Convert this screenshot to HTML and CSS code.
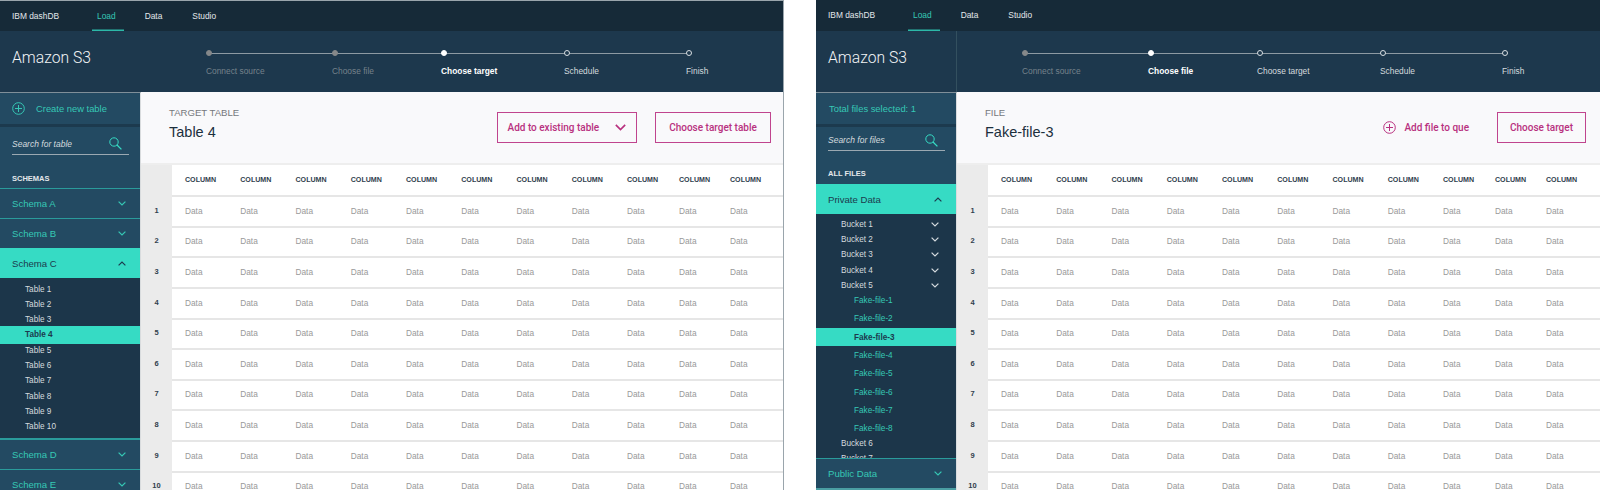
FILE: index.html
```html
<!DOCTYPE html>
<html lang="en">
<head>
    <meta charset="UTF-8">
    <title>IBM dashDB - Load</title>
    <link rel="stylesheet" href="styles.css">
</head>
<body>
    <svg class="sprite" xmlns="http://www.w3.org/2000/svg">
        <symbol id="chev-down" viewBox="0 0 8 5"><path d="M.6.6 4 4 7.4.6" fill="none" stroke="currentColor" stroke-width="1.2"/></symbol>
        <symbol id="chev-up" viewBox="0 0 8 5"><path d="M.6 4.4 4 1l3.4 3.4" fill="none" stroke="currentColor" stroke-width="1.2"/></symbol>
        <symbol id="plus" viewBox="0 0 13 13"><circle cx="6.5" cy="6.5" r="5.8" fill="none" stroke="currentColor"/><path d="M6.5 3v7M3 6.5h7" fill="none" stroke="currentColor"/></symbol>
        <symbol id="search" viewBox="0 0 13 13"><circle cx="5" cy="5" r="4.2" fill="none" stroke="currentColor"/><path d="M8 8l4.4 4.4" fill="none" stroke="currentColor" stroke-width="1.3"/></symbol>
    </svg>

    <div class="page">
        <!-- Choose target -->
        <section class="panel panel-edge">
            <nav class="topbar">
                <span class="brand">IBM dashDB</span>
                <a class="tab tab-on">Load</a>
                <a class="tab">Data</a>
                <a class="tab">Studio</a>
            </nav>
            <header class="head">
                <h1 class="source">Amazon S3</h1>
                <ol class="steps">
                    <li class="step done">Connect source</li>
                    <li class="step done">Choose file</li>
                    <li class="step now">Choose target</li>
                    <li class="step">Schedule</li>
                    <li class="step">Finish</li>
                </ol>
            </header>
            <div class="body">
                <aside class="side">
                    <div class="side-top"><svg class="ico-plus"><use href="#plus"/></svg>Create new table</div>
                    <div class="search"><span>Search for table</span><svg class="ico-search"><use href="#search"/></svg></div>
                    <div class="side-label">SCHEMAS</div>
                    <div class="acc">Schema A<svg class="chev"><use href="#chev-down"/></svg></div>
                    <div class="acc">Schema B<svg class="chev"><use href="#chev-down"/></svg></div>
                    <div class="acc acc-on">Schema C<svg class="chev"><use href="#chev-up"/></svg></div>
                    <ul class="list list-tables">
                        <li>Table 1</li>
                        <li>Table 2</li>
                        <li>Table 3</li>
                        <li class="picked">Table 4</li>
                        <li>Table 5</li>
                        <li>Table 6</li>
                        <li>Table 7</li>
                        <li>Table 8</li>
                        <li>Table 9</li>
                        <li>Table 10</li>
                    </ul>
                    <div class="acc">Schema D<svg class="chev"><use href="#chev-down"/></svg></div>
                    <div class="acc">Schema E<svg class="chev"><use href="#chev-down"/></svg></div>
                </aside>
                <main class="main">
                    <div class="main-head">
                        <div class="titles">
                            <div class="kicker">TARGET TABLE</div>
                            <div class="title">Table 4</div>
                        </div>
                        <button class="btn btn-select">Add to existing table<svg class="chev-btn"><use href="#chev-down"/></svg></button>
                        <button class="btn btn-target">Choose target table</button>
                    </div>
                    <div class="grid">
                        <div class="row row-head"><b class="num"></b><b>COLUMN</b><b>COLUMN</b><b>COLUMN</b><b>COLUMN</b><b>COLUMN</b><b>COLUMN</b><b>COLUMN</b><b>COLUMN</b><b>COLUMN</b><b>COLUMN</b><b>COLUMN</b></div>
                        <div class="row"><b class="num">1</b><i>Data</i><i>Data</i><i>Data</i><i>Data</i><i>Data</i><i>Data</i><i>Data</i><i>Data</i><i>Data</i><i>Data</i><i>Data</i></div>
                        <div class="row"><b class="num">2</b><i>Data</i><i>Data</i><i>Data</i><i>Data</i><i>Data</i><i>Data</i><i>Data</i><i>Data</i><i>Data</i><i>Data</i><i>Data</i></div>
                        <div class="row"><b class="num">3</b><i>Data</i><i>Data</i><i>Data</i><i>Data</i><i>Data</i><i>Data</i><i>Data</i><i>Data</i><i>Data</i><i>Data</i><i>Data</i></div>
                        <div class="row"><b class="num">4</b><i>Data</i><i>Data</i><i>Data</i><i>Data</i><i>Data</i><i>Data</i><i>Data</i><i>Data</i><i>Data</i><i>Data</i><i>Data</i></div>
                        <div class="row"><b class="num">5</b><i>Data</i><i>Data</i><i>Data</i><i>Data</i><i>Data</i><i>Data</i><i>Data</i><i>Data</i><i>Data</i><i>Data</i><i>Data</i></div>
                        <div class="row"><b class="num">6</b><i>Data</i><i>Data</i><i>Data</i><i>Data</i><i>Data</i><i>Data</i><i>Data</i><i>Data</i><i>Data</i><i>Data</i><i>Data</i></div>
                        <div class="row"><b class="num">7</b><i>Data</i><i>Data</i><i>Data</i><i>Data</i><i>Data</i><i>Data</i><i>Data</i><i>Data</i><i>Data</i><i>Data</i><i>Data</i></div>
                        <div class="row"><b class="num">8</b><i>Data</i><i>Data</i><i>Data</i><i>Data</i><i>Data</i><i>Data</i><i>Data</i><i>Data</i><i>Data</i><i>Data</i><i>Data</i></div>
                        <div class="row"><b class="num">9</b><i>Data</i><i>Data</i><i>Data</i><i>Data</i><i>Data</i><i>Data</i><i>Data</i><i>Data</i><i>Data</i><i>Data</i><i>Data</i></div>
                        <div class="row"><b class="num">10</b><i>Data</i><i>Data</i><i>Data</i><i>Data</i><i>Data</i><i>Data</i><i>Data</i><i>Data</i><i>Data</i><i>Data</i><i>Data</i></div>
                    </div>
                </main>
            </div>
        </section>

        <!-- Choose file -->
        <section class="panel panel-files">
            <nav class="topbar">
                <span class="brand">IBM dashDB</span>
                <a class="tab tab-on">Load</a>
                <a class="tab">Data</a>
                <a class="tab">Studio</a>
            </nav>
            <header class="head head-split">
                <h1 class="source">Amazon S3</h1>
                <ol class="steps">
                    <li class="step done">Connect source</li>
                    <li class="step now">Choose file</li>
                    <li class="step">Choose target</li>
                    <li class="step">Schedule</li>
                    <li class="step">Finish</li>
                </ol>
            </header>
            <div class="body">
                <aside class="side">
                    <div class="side-top side-total">Total files selected: 1</div>
                    <div class="search"><span>Search for files</span><svg class="ico-search"><use href="#search"/></svg></div>
                    <div class="side-label">ALL FILES</div>
                    <div class="acc acc-on">Private Data<svg class="chev"><use href="#chev-up"/></svg></div>
                    <ul class="list list-files">
                        <li>Bucket 1<svg class="chev-sm"><use href="#chev-down"/></svg></li>
                        <li>Bucket 2<svg class="chev-sm"><use href="#chev-down"/></svg></li>
                        <li>Bucket 3<svg class="chev-sm"><use href="#chev-down"/></svg></li>
                        <li>Bucket 4<svg class="chev-sm"><use href="#chev-down"/></svg></li>
                        <li>Bucket 5<svg class="chev-sm"><use href="#chev-down"/></svg></li>
                        <li class="file">Fake-file-1</li>
                        <li class="file">Fake-file-2</li>
                        <li class="file picked">Fake-file-3</li>
                        <li class="file">Fake-file-4</li>
                        <li class="file">Fake-file-5</li>
                        <li class="file">Fake-file-6</li>
                        <li class="file">Fake-file-7</li>
                        <li class="file">Fake-file-8</li>
                        <li>Bucket 6</li>
                        <li>Bucket 7</li>
                    </ul>
                    <div class="acc acc-last">Public Data<svg class="chev"><use href="#chev-down"/></svg></div>
                </aside>
                <main class="main">
                    <div class="main-head">
                        <div class="titles">
                            <div class="kicker">FILE</div>
                            <div class="title">Fake-file-3</div>
                        </div>
                        <a class="add-link"><svg class="ico-plus"><use href="#plus"/></svg>Add file to que</a>
                        <button class="btn btn-choose">Choose target</button>
                    </div>
                    <div class="grid">
                        <div class="row row-head"><b class="num"></b><b>COLUMN</b><b>COLUMN</b><b>COLUMN</b><b>COLUMN</b><b>COLUMN</b><b>COLUMN</b><b>COLUMN</b><b>COLUMN</b><b>COLUMN</b><b>COLUMN</b><b>COLUMN</b></div>
                        <div class="row"><b class="num">1</b><i>Data</i><i>Data</i><i>Data</i><i>Data</i><i>Data</i><i>Data</i><i>Data</i><i>Data</i><i>Data</i><i>Data</i><i>Data</i></div>
                        <div class="row"><b class="num">2</b><i>Data</i><i>Data</i><i>Data</i><i>Data</i><i>Data</i><i>Data</i><i>Data</i><i>Data</i><i>Data</i><i>Data</i><i>Data</i></div>
                        <div class="row"><b class="num">3</b><i>Data</i><i>Data</i><i>Data</i><i>Data</i><i>Data</i><i>Data</i><i>Data</i><i>Data</i><i>Data</i><i>Data</i><i>Data</i></div>
                        <div class="row"><b class="num">4</b><i>Data</i><i>Data</i><i>Data</i><i>Data</i><i>Data</i><i>Data</i><i>Data</i><i>Data</i><i>Data</i><i>Data</i><i>Data</i></div>
                        <div class="row"><b class="num">5</b><i>Data</i><i>Data</i><i>Data</i><i>Data</i><i>Data</i><i>Data</i><i>Data</i><i>Data</i><i>Data</i><i>Data</i><i>Data</i></div>
                        <div class="row"><b class="num">6</b><i>Data</i><i>Data</i><i>Data</i><i>Data</i><i>Data</i><i>Data</i><i>Data</i><i>Data</i><i>Data</i><i>Data</i><i>Data</i></div>
                        <div class="row"><b class="num">7</b><i>Data</i><i>Data</i><i>Data</i><i>Data</i><i>Data</i><i>Data</i><i>Data</i><i>Data</i><i>Data</i><i>Data</i><i>Data</i></div>
                        <div class="row"><b class="num">8</b><i>Data</i><i>Data</i><i>Data</i><i>Data</i><i>Data</i><i>Data</i><i>Data</i><i>Data</i><i>Data</i><i>Data</i><i>Data</i></div>
                        <div class="row"><b class="num">9</b><i>Data</i><i>Data</i><i>Data</i><i>Data</i><i>Data</i><i>Data</i><i>Data</i><i>Data</i><i>Data</i><i>Data</i><i>Data</i></div>
                        <div class="row"><b class="num">10</b><i>Data</i><i>Data</i><i>Data</i><i>Data</i><i>Data</i><i>Data</i><i>Data</i><i>Data</i><i>Data</i><i>Data</i><i>Data</i></div>
                    </div>
                </main>
            </div>
        </section>
    </div>
</body>
</html>
```

FILE: styles.css
```css
html, body {
    margin: 0;
    height: 490px;
    overflow: hidden;
    background-color: #fff;
    font-family: "Liberation Sans", Arial, sans-serif;
}

.sprite {
    display: none;
}

.page {
    display: flex;
    justify-content: space-between;
    height: 490px;
}

.panel {
    width: 784px;
    height: 490px;
    display: flex;
    flex-direction: column;
    overflow: hidden;
    box-sizing: border-box;
}

.panel-edge {
    border-top: 1px solid #9aa5ac;
    border-right: 1px solid #9aa5ac;
}

/* top bar */
.topbar {
    height: 31px;
    flex: none;
    display: flex;
    align-items: stretch;
    background-color: #162a38;
    color: #e3e8eb;
    font-size: 8.4px;
    line-height: 30px;
}

.panel-edge .topbar {
    height: 30px;
}

.brand {
    width: 47px;
    margin-left: 12px;
    margin-right: 33px;
}

.tab {
    padding: 0 5px;
    margin-right: 20px;
    color: #e3e8eb;
}

.tab-on {
    padding-right: 8px;
    margin-right: 16px;
    color: #36c8b5;
    box-shadow: inset 0 -1.5px 0 #2cb8a8;
}

/* header with the stepper */
.head {
    height: 61px;
    flex: none;
    display: flex;
    background-color: #1d384d;
}

.source {
    width: 141px;
    box-sizing: border-box;
    margin: 0;
    padding: 17px 0 0 12px;
    font-family: Roboto, "Liberation Sans", sans-serif;
    font-size: 15.7px;
    font-weight: 300;
    line-height: 20px;
    color: #f2f4f6;
}

.head-split .source {
    border-right: 1px solid #33505f;
}

.steps {
    display: grid;
    grid-template-columns: 126px 109px 123px 122px 60px;
    list-style: none;
    margin: 0;
    padding: 0 0 0 65px;
}

.step {
    position: relative;
    padding-top: 34px;
    font-size: 8.4px;
    line-height: 12px;
    color: #d5dbdf;
}

.step::before {
    content: "";
    position: absolute;
    left: 3px;
    right: -3px;
    top: 21.5px;
    height: 1px;
    background-color: #8d9aa3;
}

.step:last-child::before {
    display: none;
}

.step::after {
    content: "";
    position: absolute;
    left: 0;
    top: 19px;
    width: 6px;
    height: 6px;
    box-sizing: border-box;
    border-radius: 50%;
    border: 1.2px solid #d8dee2;
    background-color: #1d384d;
}

.step.done {
    color: #75828b;
}

.step.done::after {
    background-color: #85888a;
    border-color: #85888a;
}

.step.now {
    color: #fff;
    font-weight: bold;
}

.step.now::after {
    background-color: #fff;
    border-color: #fff;
}

.body {
    flex: 1;
    min-height: 0;
    display: flex;
}

/* sidebar */
.side {
    width: 141px;
    flex: none;
    display: flex;
    flex-direction: column;
    overflow: hidden;
    box-sizing: border-box;
    background-color: #234a62;
    border-top: 1px solid #7f8f99;
    border-right: 1px solid #d9dcde;
}

.side-top {
    height: 31px;
    flex: none;
    display: flex;
    align-items: center;
    padding-left: 12px;
    border-bottom: 3px solid #1c3a4e;
    font-size: 9.4px;
    color: #36c8b5;
}

.side-top .ico-plus {
    margin-right: 11px;
}

.ico-plus {
    width: 13px;
    height: 13px;
    flex: none;
}

.side-total {
    padding-left: 13px;
}

.search {
    height: 28px;
    flex: none;
    box-sizing: border-box;
    margin: 0 11px 0 12px;
    padding-top: 6px;
    display: flex;
    align-items: center;
    justify-content: space-between;
    border-bottom: 1.5px solid #9ba9b2;
    font-size: 8.5px;
    font-style: italic;
    color: #d5dbdf;
}

.panel-files .search {
    height: 24px;
    padding-top: 3px;
}

.ico-search {
    width: 13px;
    height: 13px;
    color: #36dbc4;
    margin-right: 7px;
}

.side-label {
    height: 33px;
    flex: none;
    padding-left: 12px;
    font-size: 7.5px;
    font-weight: bold;
    line-height: 47px;
    color: #e3e8eb;
    overflow: hidden;
}

.panel-files .side-label {
    line-height: 45px;
}

.acc {
    height: 30px;
    flex: none;
    box-sizing: border-box;
    display: flex;
    align-items: center;
    justify-content: space-between;
    padding: 0 14px 0 12px;
    border-top: 1px solid #2a9b9b;
    font-size: 9.6px;
    color: #36c8b5;
}

.chev {
    width: 8px;
    height: 5px;
    flex: none;
}

.acc-on {
    background-color: #36dbc4;
    border-top: 0;
    color: #1c3a4e;
}

.acc-last {
    border-bottom: 2px solid #4a9ea3;
    height: 32px;
}

/* lists inside the accordion */
.list {
    list-style: none;
    margin: 0;
    padding: 0;
    background-color: #1c364a;
    font-size: 8.2px;
    color: #d5dbdf;
}

.list-tables {
    height: 161px;
    flex: none;
    box-sizing: border-box;
    padding-top: 3.4px;
    border-bottom: 1px solid #2a9b9b;
}

.list-files {
    flex: 1;
    min-height: 0;
    overflow: hidden;
    padding-top: 2.5px;
}

.list li {
    display: flex;
    align-items: center;
    justify-content: space-between;
    height: 15.3px;
    padding: 0 17px 0 25px;
}

.chev-sm {
    width: 8px;
    height: 5px;
    flex: none;
}

.list .file {
    height: 18.3px;
    padding-left: 38px;
    color: #36c8b5;
}

.list li:not(.file) + .file {
    margin-top: -1.5px;
}

.list .file + li:not(.file) {
    margin-top: -2.5px;
}

.list .picked {
    background-color: #36dbc4;
    color: #1c3a4e;
    font-weight: bold;
    height: 18.3px;
    margin: -1.5px 0;
}

.list .file.picked {
    margin: 0;
}

/* main area */
.main {
    flex: 1;
    min-width: 0;
    display: flex;
    flex-direction: column;
    background-color: #f9f9fb;
}

.main-head {
    height: 71px;
    flex: none;
    display: flex;
    align-items: center;
    padding-right: 12px;
    padding-left: 28px;
    border-bottom: 2px solid #eeeeee;
}

.titles {
    flex: 1;
    padding-bottom: 8px;
}

.kicker {
    font-size: 9.6px;
    line-height: 13px;
    color: #75787b;
}

.title {
    margin-top: 4px;
    font-size: 14.5px;
    line-height: 18px;
    color: #1c2f3d;
}

.btn {
    height: 31px;
    box-sizing: border-box;
    display: flex;
    align-items: center;
    background: none;
    border: 1.5px solid #c0448e;
    border-radius: 0;
    padding: 0;
    font-family: Roboto, "Liberation Sans", sans-serif;
    font-size: 10px;
    font-weight: 500;
    color: #b8317f;
}

.btn-select {
    width: 140px;
    padding-left: 9.5px;
    margin-right: 18px;
}

.chev-btn {
    width: 11px;
    height: 7px;
    margin-left: 16px;
    color: #b8317f;
}

.btn-target {
    width: 116px;
    justify-content: center;
}

.btn-choose {
    width: 89px;
    justify-content: center;
    margin-left: 28px;
    margin-right: 2px;
}

.add-link {
    display: flex;
    align-items: center;
    font-family: Roboto, "Liberation Sans", sans-serif;
    font-size: 10px;
    font-weight: 500;
    color: #b8317f;
}

.add-link .ico-plus {
    margin-right: 8px;
}

/* data table */
.grid {
    flex: 1;
    min-height: 0;
    overflow: hidden;
    background-color: #fff;
}

.row {
    display: grid;
    grid-template-columns: 31px repeat(8, 55.25px) 52px 51px 1fr;
    height: 30.65px;
}

.row b,
.row i {
    display: block;
    box-sizing: border-box;
    padding-left: 13px;
    border-bottom: 2px solid #e6e6e6;
    line-height: 30px;
    font-style: normal;
    font-size: 8.3px;
    color: #999;
    font-weight: normal;
}

.row-head b {
    font-size: 7.1px;
    font-weight: bold;
    color: #30404d;
}

.row .num {
    padding: 0;
    text-align: center;
    border-bottom: 0;
    background-color: #ebebeb;
    font-size: 7.5px;
    font-weight: bold;
    color: #30404d;
}
```
